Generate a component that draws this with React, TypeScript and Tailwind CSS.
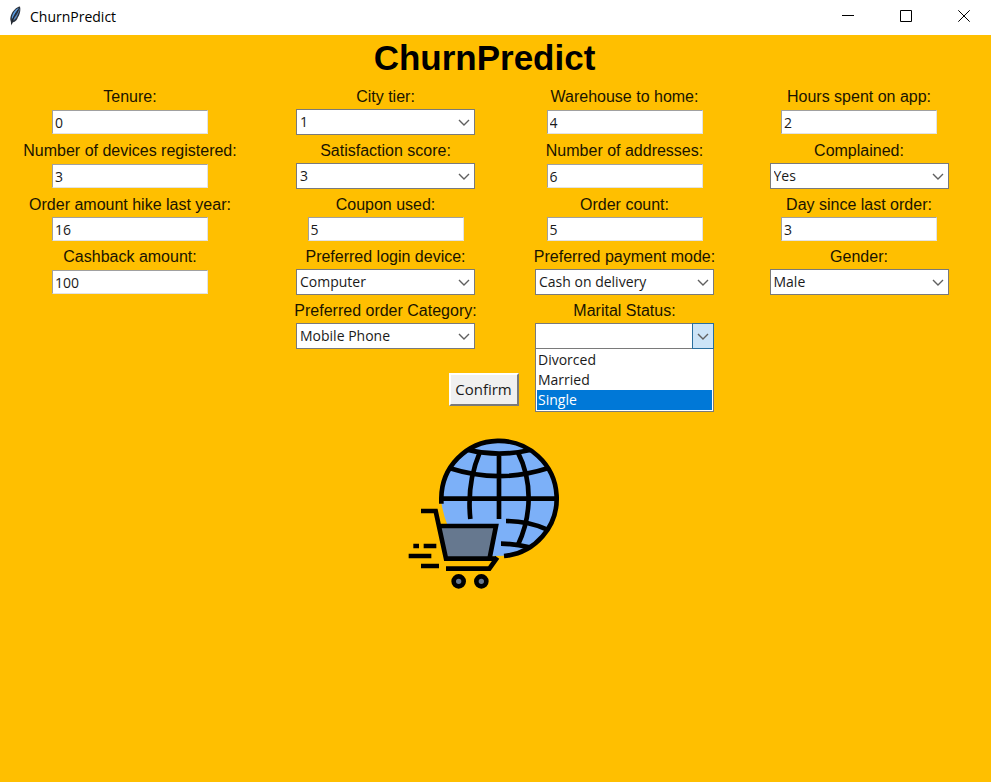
import { ReactNode } from "react";

type Field = {
  id: string;
  label: string;
  value: string;
  options?: string[];
  open?: boolean;
};

const rows: Field[][] = [
  [
    { id: "tenure", label: "Tenure:", value: "0" },
    { id: "city-tier", label: "City tier:", value: "1", options: ["1", "2", "3"] },
    { id: "warehouse", label: "Warehouse to home:", value: "4" },
    { id: "hours", label: "Hours spent on app:", value: "2" },
  ],
  [
    { id: "devices", label: "Number of devices registered:", value: "3" },
    { id: "satisfaction", label: "Satisfaction score:", value: "3", options: ["1", "2", "3", "4", "5"] },
    { id: "addresses", label: "Number of addresses:", value: "6" },
    { id: "complained", label: "Complained:", value: "Yes", options: ["Yes", "No"] },
  ],
  [
    { id: "hike", label: "Order amount hike last year:", value: "16" },
    { id: "coupon", label: "Coupon used:", value: "5" },
    { id: "order-count", label: "Order count:", value: "5" },
    { id: "last-order", label: "Day since last order:", value: "3" },
  ],
  [
    { id: "cashback", label: "Cashback amount:", value: "100" },
    { id: "login", label: "Preferred login device:", value: "Computer", options: ["Computer", "Phone"] },
    { id: "payment", label: "Preferred payment mode:", value: "Cash on delivery", options: ["Cash on delivery", "Credit card"] },
    { id: "gender", label: "Gender:", value: "Male", options: ["Male", "Female"] },
  ],
];

const lastRow: Field[] = [
  { id: "category", label: "Preferred order Category:", value: "Mobile Phone", options: ["Mobile Phone", "Laptop"] },
  { id: "marital", label: "Marital Status:", value: "", options: ["", "Divorced", "Married", "Single"], open: true },
];

function Entry({ field }: { field: Field }) {
  return (
    <input
      id={field.id}
      defaultValue={field.value}
      className="h-6 w-[156px] border border-t-[#a0a0a0] border-l-[#a0a0a0] border-r-[#e3e3e3] border-b-[#e3e3e3] bg-white px-0.5 text-[14px] leading-5 text-[#1a1a1a] outline-none"
    />
  );
}

function Combo({ field }: { field: Field }) {
  return (
    <div className="relative h-[26px] w-[179px]">
      <select
        id={field.id}
        defaultValue={field.value}
        className="block h-full w-full appearance-none border border-[#7a7a7a] bg-white px-[3px] text-[14px] leading-5 text-[#1a1a1a] outline-none"
      >
        {field.options?.map((o) => (
          <option key={o}>{o}</option>
        ))}
      </select>
      <span
        className={
          field.open
            ? "pointer-events-none absolute inset-y-0 right-0 flex w-[22px] items-center justify-center border border-[#2a6f9e] bg-[#cce4f7]"
            : "pointer-events-none absolute inset-y-0 right-0 flex w-[22px] items-center justify-center"
        }
      >
        <svg width="12" height="7" viewBox="0 0 12 7" fill="none" stroke="#606060" strokeWidth="1.4">
          <path d="M1 1l5 5 5-5" />
        </svg>
      </span>
      {field.open && (
        <ul
          role="listbox"
          aria-label={field.label}
          className="absolute top-full left-0 z-10 w-full border border-t-0 border-[#7a7a7a] bg-white p-px text-[14px] leading-5 text-[#1a1a1a]"
        >
          <li role="option" aria-selected={false} className="px-px">Divorced</li>
          <li role="option" aria-selected={false} className="px-px">Married</li>
          <li role="option" aria-selected className="bg-[#0078d7] px-px text-white">Single</li>
        </ul>
      )}
    </div>
  );
}

function Cell({ field, className = "" }: { field: Field; className?: string }) {
  return (
    <div className={`flex flex-col items-center ${className}`}>
      <label
        htmlFor={field.id}
        className="flex h-7 items-center pt-1 font-['Liberation_Sans',Arial,sans-serif] text-[16px] whitespace-nowrap text-[#1a1400]"
      >
        {field.label}
      </label>
      <div className="flex flex-1 items-center">
        {field.options ? <Combo field={field} /> : <Entry field={field} />}
      </div>
    </div>
  );
}

function WindowButton({ label, children }: { label: string; children: ReactNode }) {
  return (
    <button type="button" aria-label={label} className="flex h-8 w-[58px] items-center justify-center">
      <svg width="12" height="12" viewBox="0 0 12 12" fill="none" stroke="#000">
        {children}
      </svg>
    </button>
  );
}

function Feather() {
  return (
    <svg width="14" height="20" viewBox="0 0 14 20">
      <path d="M12 .4C8.400 1 4.600 4.600 3 9.200 2.200 11.800 2 13.600 2.800 15.400L3.400 19.400 4.600 16.600C7.600 15.600 9.400 13.400 9.800 11.400L11 9.400C12.200 6.600 12.800 3.400 12 .4Z" fill="#2b323d" />
      <path d="M10.800 1.800C7.600 3.400 4.800 6.400 4 10.600L3.800 13.400 7.600 7.600Z" fill="#5b9be0" />
      <path d="M11.400 2.400C10.800 5.400 9 8.600 6.600 11.400L5.200 14.400C8 13 9 10.400 9.800 8.400 10.800 6 11.800 4.600 11.400 2.400Z" fill="#5f8fc8" />
      <path d="M10 4C7 7.600 4.600 12 3.500 18" stroke="#1d2026" strokeWidth=".8" fill="none" />
    </svg>
  );
}

function ShopLogo() {
  return (
    <svg width="152" height="152" viewBox="24 24 456 456" fill="none" stroke="#000" strokeWidth="14">
      <path d="M125 205A172 172 0 1 1 312 377L275 378 290 288 142 284Q130 255 124 218Z" fill="#7cb0f8" stroke="none" />
      <path d="M124 221V205A173 173 0 1 1 312 378" />
      <path d="M125 206H470M297 70V267M205 60Q297 82 390 60M150 115Q297 162 443 115" />
      <path d="M239 68Q200 160 211 267M354 68Q386 130 386 205Q385 280 354 344" />
      <path d="M318 273Q384 273 440 298M303 341Q345 341 388 352" />
      <path d="M118 288H288L270 386H138Z" fill="#66788f" stroke="none" />
      <path d="M63 243H107L138 386H288M118 288H288L269 384" />
      <path d="M138 416H268L292 382" />
      <path d="M40 348H57M71 348H109M26 378H94M63 408H117" />
      <circle cx="176" cy="454" r="15" fill="#66788f" />
      <circle cx="244" cy="454" r="15" fill="#66788f" />
    </svg>
  );
}

export default function App() {
  return (
    <div className="flex min-h-screen flex-col bg-[#ffbf00] font-['Open_Sans','Noto_Sans',sans-serif]">
      <header className="flex h-[35px] items-start justify-between bg-white pl-2">
        <div className="flex h-8 items-center gap-2">
          <Feather />
          <span className="text-[14px] text-black">ChurnPredict</span>
        </div>
        <div className="flex -mr-[2px]">
          <WindowButton label="Minimize"><path d="M0 5.500H12" /></WindowButton>
          <WindowButton label="Maximize"><path d="M.5.5H11.500V11.500H.5Z" /></WindowButton>
          <WindowButton label="Close"><path d="M.3.3L11.700 11.700M11.700.3L.3 11.700" /></WindowButton>
        </div>
      </header>
      <main>
        <form onSubmit={(e) => e.preventDefault()}>
          <h1 className="flex h-[46px] items-center justify-center pr-[22px] font-['Liberation_Sans',Arial,sans-serif] text-[35px] font-bold text-black">
            ChurnPredict
          </h1>
          <div className="grid grid-cols-[260fr_251fr_227fr_242fr] pr-[11px]">
            {rows.flat().map((f) => (
              <Cell key={f.id} field={f} />
            ))}
            <Cell field={lastRow[0]} className="col-start-2" />
            <Cell field={lastRow[1]} />
          </div>
          <div className="flex justify-center pt-6 pr-6">
            <button
              type="submit"
              className="h-[33px] w-[70px] border-2 border-t-white border-l-white border-r-[#7a7a7a] border-b-[#7a7a7a] bg-[#f0f0f0] text-[15px] text-[#1a1a1a]"
            >
              Confirm
            </button>
          </div>
        </form>
        <div className="flex justify-center pt-8 pr-6">
          <ShopLogo />
        </div>
      </main>
    </div>
  );
}
